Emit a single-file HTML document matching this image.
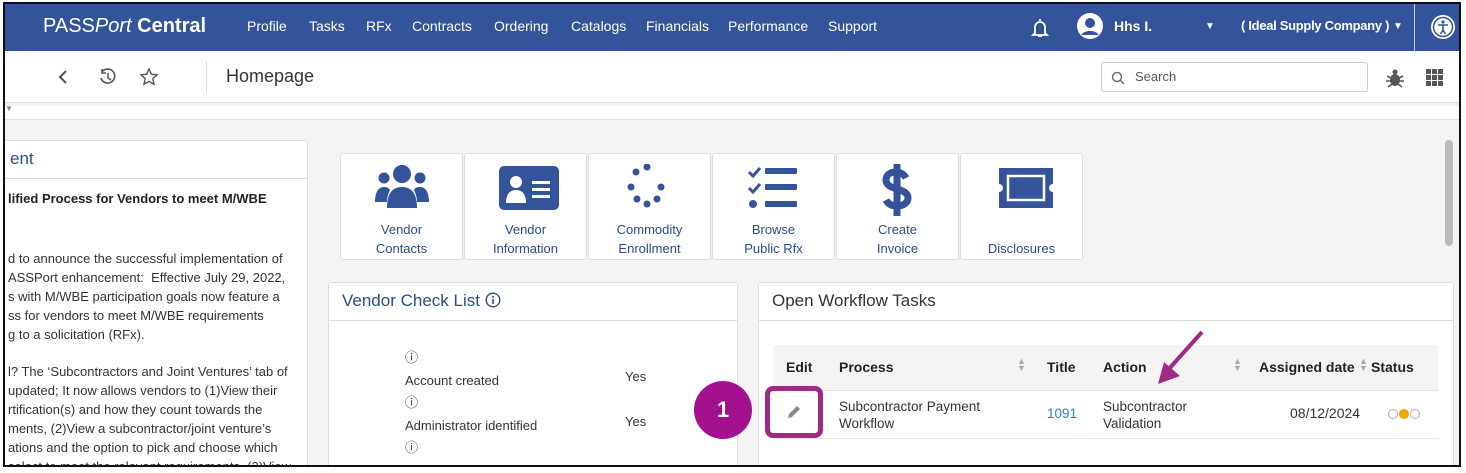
<!DOCTYPE html>
<html><head><meta charset="utf-8"><style>
*{box-sizing:border-box;margin:0;padding:0}
body{width:1466px;height:473px;overflow:hidden;background:#fff;font-family:"Liberation Sans",sans-serif;position:relative}
.frame{position:absolute;left:3px;top:2px;width:1458px;height:465px;border:2px solid #111;overflow:hidden;background:#f4f4f4}
.nav{position:absolute;left:0;top:0;width:100%;height:47px;background:#33539a;color:#fff}
.nav span{position:absolute;top:14px;font-size:14px}
.bar{position:absolute;left:0;top:47px;width:100%;height:52px;background:#fff;border-bottom:1px solid #ddd}
.strip{position:absolute;left:0;top:102px;width:100%;height:14px;background:#fff;border-bottom:1px solid #e0e0e0}
.panel{position:absolute;background:#fff;border:1px solid #ddd;border-radius:3px}
.ph{height:38px;border-bottom:1px solid #ddd;color:#2b4a8c;font-size:17px;padding:8px 13px}
.tile{position:absolute;top:149px;width:123px;height:107px;background:#fff;border:1px solid #ddd;border-radius:3px;text-align:center;color:#2b4a8c;font-size:13px}
.tile svg{position:absolute;left:34px;top:10px}
.tile .l{position:absolute;left:0;right:0;top:66px;line-height:19px}
.txt{position:absolute;font-size:13px;color:#333;white-space:nowrap}
.th{font-size:14px;font-weight:600;color:#222}
</style></head><body>
<div class="frame">
<div class="nav">
<span style="left:38px;top:11px;font-size:20px">PASS<i>Port</i> <b>Central</b></span>
<span style="left:242px">Profile</span><span style="left:304px">Tasks</span><span style="left:361px">RFx</span><span style="left:407px">Contracts</span><span style="left:489px">Ordering</span><span style="left:566px">Catalogs</span><span style="left:641px">Financials</span><span style="left:723px">Performance</span><span style="left:823px">Support</span>
<svg style="position:absolute;left:1026px;top:13px" width="18" height="22" viewBox="0 0 18 22"><path d="M9 2v2M4 16V10a5 5 0 0110 0v6l2 2H2z M7 19h4" fill="none" stroke="#fff" stroke-width="1.8"/></svg>
<svg style="position:absolute;left:1071px;top:8px" width="28" height="28" viewBox="0 0 28 28"><circle cx="14" cy="14" r="13" fill="#fff"/><circle cx="14" cy="11" r="5" fill="#33539a"/><path d="M5 23a10 7 0 0118 0" fill="#33539a"/></svg>
<span style="left:1109px;font-weight:bold">Hhs I.</span>
<span style="left:1200px;font-size:10px;top:17px">▼</span>
<span style="left:1236px;font-weight:bold;font-size:13px;letter-spacing:-0.3px">( Ideal Supply Company )</span><span style="left:1388px;font-size:10px;top:17px">▼</span>
<div style="position:absolute;left:1409px;top:0;width:1px;height:47px;background:#ccd"></div>
<svg style="position:absolute;left:1425px;top:10px" width="26" height="26" viewBox="0 0 26 26"><circle cx="13" cy="13" r="12" fill="#fff"/><circle cx="13" cy="13" r="9.5" fill="none" stroke="#33539a" stroke-width="1.5"/><circle cx="13" cy="8" r="1.6" fill="#33539a"/><path d="M8 11h10M13 11v5l-2.5 4M13 16l2.5 4" stroke="#33539a" stroke-width="1.6" fill="none"/></svg>
</div>
<div class="bar">
<svg style="position:absolute;left:52px;top:18px" width="12" height="16"><path d="M9 2L3 8l6 6" stroke="#555" stroke-width="2" fill="none"/></svg>
<svg style="position:absolute;left:93px;top:16px" width="20" height="20" viewBox="0 0 20 20"><path d="M4 5a7 7 0 11-1 6M4 2v4h4M10 6v5l3 2" stroke="#555" stroke-width="1.6" fill="none"/></svg>
<svg style="position:absolute;left:134px;top:16px" width="20" height="20" viewBox="0 0 20 20"><path d="M10 2l2.4 5.2 5.6.6-4.2 3.8 1.2 5.6L10 14.4 5 17.2l1.2-5.6L2 7.8l5.6-.6z" stroke="#555" stroke-width="1.4" fill="none"/></svg>
<div style="position:absolute;left:201px;top:10px;width:1px;height:32px;background:#ddd"></div>
<span style="position:absolute;left:221px;top:15px;font-size:18px;color:#333">Homepage</span>
<div style="position:absolute;left:1096px;top:11px;width:267px;height:30px;border:1px solid #ccc;border-radius:3px"><svg style="position:absolute;left:9px;top:8px" width="14" height="14"><circle cx="6" cy="6" r="4.5" stroke="#666" stroke-width="1.4" fill="none"/><path d="M9.5 9.5l3.5 3.5" stroke="#666" stroke-width="1.5"/></svg><span style="position:absolute;left:33px;top:6px;font-size:13px;color:#555">Search</span></div>
<svg style="position:absolute;left:1380px;top:17px" width="20" height="20" viewBox="0 0 20 20"><circle cx="10" cy="4" r="2.5" fill="#555"/><ellipse cx="10" cy="12" rx="5" ry="6" fill="#555"/><path d="M2 8l4 2M18 8l-4 2M1 13h5M19 13h-5M3 19l4-3M17 19l-4-3" stroke="#555" stroke-width="1.6"/></svg>
<svg style="position:absolute;left:1421px;top:18px" width="17" height="17"><g fill="#555"><rect x="0" y="0" width="5" height="5"/><rect x="6" y="0" width="5" height="5"/><rect x="12" y="0" width="5" height="5"/><rect x="0" y="6" width="5" height="5"/><rect x="6" y="6" width="5" height="5"/><rect x="12" y="6" width="5" height="5"/><rect x="0" y="12" width="5" height="5"/><rect x="6" y="12" width="5" height="5"/><rect x="12" y="12" width="5" height="5"/></g></svg>
</div>
<div class="strip"><span style="position:absolute;left:0;top:-2px;font-size:8px;color:#888">▼</span></div>

<div class="panel" style="left:-5px;top:136px;width:308px;height:340px">
<div class="ph" style="padding-left:9px">ent</div>
<div class="txt" style="left:7px;top:50px;font-weight:bold;color:#222">lified Process for Vendors to meet M/WBE</div>
<div class="txt" style="left:7px;top:108px;line-height:19px">d to announce the successful implementation of<br>ASSPort enhancement:&nbsp; Effective July 29, 2022,<br>s with M/WBE participation goals now feature a<br>ss for vendors to meet M/WBE requirements<br>g to a solicitation (RFx).</div>
<div class="txt" style="left:7px;top:221px;line-height:19px">l? The ‘Subcontractors and Joint Ventures’ tab of<br>updated; It now allows vendors to (1)View their<br>rtification(s) and how they count towards the<br>ments, (2)View a subcontractor/joint venture’s<br>ations and the option to pick and choose which<br>select to meet the relevant requirements, (3)View</div>
</div>

<div class="tile" style="left:335px"><svg width="54" height="50" viewBox="0 0 54 50"><g fill="#33539a"><circle cx="27" cy="10" r="9"/><circle cx="9" cy="14" r="5.5"/><circle cx="45" cy="14" r="5.5"/><path d="M12 44c0-14 5-21 15-21s15 7 15 21z"/><path d="M0 38c0-9 3-15 9-15 3 0 5 1 6 3-2 4-3 8-3 12z"/><path d="M54 38c0-9-3-15-9-15-3 0-5 1-6 3 2 4 3 8 3 12z"/></g></svg><div class="l">Vendor<br>Contacts</div></div>
<div class="tile" style="left:459px"><svg width="60" height="50" viewBox="0 0 60 50"><rect x="0" y="2" width="60" height="44" rx="5" fill="#33539a"/><circle cx="17" cy="18" r="6" fill="#fff"/><path d="M7 39c0-9 4-13 10-13s10 4 10 13z" fill="#fff"/><rect x="33" y="17" width="18" height="3" fill="#fff"/><rect x="33" y="24" width="18" height="3" fill="#fff"/><rect x="33" y="31" width="18" height="3" fill="#fff"/></svg><div class="l">Vendor<br>Information</div></div>
<div class="tile" style="left:583px"><svg width="56" height="52" viewBox="0 0 56 52"><g fill="#33539a"><circle cx="24" cy="3" r="3.5"/><circle cx="13" cy="8" r="3.5"/><circle cx="8" cy="23" r="3.5"/><circle cx="38" cy="23" r="3.5"/><circle cx="14" cy="35" r="3.5"/><circle cx="34" cy="35" r="3.5"/><circle cx="24" cy="40" r="3.5"/></g></svg><div class="l">Commodity<br>Enrollment</div></div>
<div class="tile" style="left:707px"><svg width="56" height="52" viewBox="0 0 56 52"><g fill="#33539a"><path d="M2 8l4 4 7-8" stroke="#33539a" stroke-width="3" fill="none"/><rect x="18" y="4" width="32" height="6" rx="1"/><path d="M2 24l4 4 7-8" stroke="#33539a" stroke-width="3" fill="none"/><rect x="18" y="20" width="32" height="6" rx="1"/><circle cx="6" cy="40" r="4"/><rect x="18" y="37" width="32" height="6" rx="1"/></g></svg><div class="l">Browse<br>Public Rfx</div></div>
<div class="tile" style="left:831px"><svg width="56" height="52" viewBox="0 0 56 52"><path d="M35 14c-2-4-6-6-10-6-6 0-10 3-10 8 0 11 22 7 22 18 0 5-5 8-11 8-5 0-9-2-11-6M26 0v52" stroke="#33539a" stroke-width="7" fill="none"/></svg><div class="l">Create<br>Invoice</div></div>
<div class="tile" style="left:955px"><svg width="62" height="50" viewBox="0 0 62 50"><path d="M4 4h54v16a4 4 0 000 8v16H4V28a4 4 0 000-8z" fill="#33539a"/><rect x="13" y="12" width="36" height="24" fill="none" stroke="#fff" stroke-width="2.5"/></svg><div class="l" style="top:85px">Disclosures</div></div>

<div class="panel" style="left:323px;top:278px;width:410px;height:200px">
<div class="ph">Vendor Check List <svg width="16" height="16" style="vertical-align:-2px"><circle cx="8" cy="8" r="6.8" stroke="#2b4a8c" stroke-width="1.4" fill="none"/><rect x="7.2" y="7" width="1.6" height="5" fill="#2b4a8c"/><circle cx="8" cy="4.7" r="1" fill="#2b4a8c"/></svg></div>
<div class="txt" style="left:76px;top:64px;line-height:22.5px">ⓘ<br>Account created<br>ⓘ<br>Administrator identified<br>ⓘ<br>Signer identified</div>
<div class="txt" style="left:296px;top:86px">Yes</div><div class="txt" style="left:296px;top:131px">Yes</div>
</div>

<div class="panel" style="left:753px;top:278px;width:696px;height:200px">
<div class="ph" style="color:#333">Open Workflow Tasks</div>
<div style="position:absolute;left:14px;top:62px;width:665px;height:46px;background:#f4f4f4;border-bottom:1px solid #e2e2e2"></div>
<div style="position:absolute;left:14px;top:155px;width:665px;height:1px;background:#e6e6e6"></div>
<div class="txt th" style="left:27px;top:76px">Edit</div>
<div class="txt th" style="left:80px;top:76px">Process</div>
<div class="txt th" style="left:288px;top:76px">Title</div>
<div class="txt th" style="left:344px;top:76px">Action</div>
<div class="txt th" style="left:500px;top:76px">Assigned date</div>
<div class="txt th" style="left:612px;top:76px">Status</div>
<div class="txt" style="left:258px;top:75px;font-size:9px;color:#aaa;line-height:7px">▲<br>▼</div>
<div class="txt" style="left:474px;top:75px;font-size:9px;color:#aaa;line-height:7px">▲<br>▼</div>
<div class="txt" style="left:600px;top:75px;font-size:9px;color:#aaa;line-height:7px">▲<br>▼</div>
<div class="txt" style="left:80px;top:115px;line-height:17px;font-size:13.5px">Subcontractor Payment<br>Workflow</div>
<div class="txt" style="left:288px;top:123px;color:#2f7bd0;font-size:13.5px">1091</div>
<div class="txt" style="left:344px;top:115px;line-height:17px;font-size:13.5px">Subcontractor<br>Validation</div>
<div class="txt" style="left:531px;top:122px;font-size:14px">08/12/2024</div>
<svg style="position:absolute;left:628px;top:125px" width="36" height="12"><circle cx="6" cy="6" r="4.5" fill="none" stroke="#aab" /><circle cx="17" cy="6" r="5" fill="#f0a500"/><circle cx="28" cy="6" r="4.5" fill="none" stroke="#aab"/></svg>
</div>
<div style="position:absolute;left:1440px;top:136px;width:8px;height:106px;background:#bbb;border-radius:4px"></div>
</div>
<!-- annotations -->
<div style="position:absolute;left:765px;top:386px;width:58px;height:52px;border:5px solid #9e2a86;border-radius:8px;background:#fff"></div>
<svg style="position:absolute;left:785px;top:403px" width="18" height="18" viewBox="0 0 18 18"><path d="M3 15l1-4 8-8 3 3-8 8z" fill="#888"/></svg>
<div style="position:absolute;left:694px;top:381px;width:58px;height:58px;border-radius:50%;background:#a3118f;color:#fff;font-weight:bold;font-size:22px;text-align:center;line-height:58px">1</div>
<svg style="position:absolute;left:1150px;top:328px" width="60" height="62"><path d="M52 4L18 42" stroke="#9e2a86" stroke-width="4"/><path d="M8 56l6-22 16 14z" fill="#9e2a86"/></svg>
</body></html>
